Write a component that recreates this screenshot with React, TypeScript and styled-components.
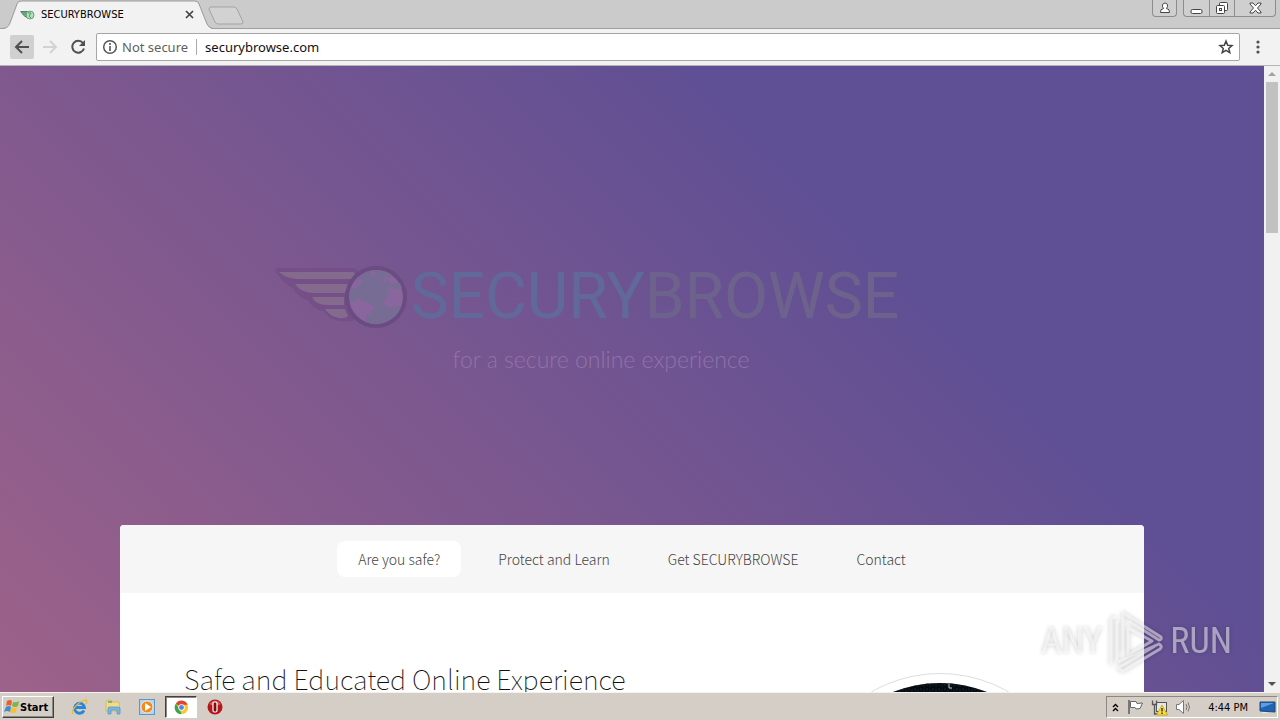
import React from "react";
import styled, { createGlobalStyle } from "styled-components";

const uiFont = '"DejaVu Sans Condensed", "DejaVu Sans", sans-serif';
const siteFont = '"Noto Sans CJK JP", "Noto Sans", sans-serif';

const GlobalStyle = createGlobalStyle`
  * { box-sizing: border-box; }
  body { margin: 0; background: #fff; }
  button, input { font: inherit; color: inherit; padding: 0; border: 0; background: none; }
  h1, h2, p { margin: 0; font-weight: inherit; }
  svg { display: block; flex: none; }
`;

const Screen = styled.div`
  height: 100vh;
  display: flex;
  flex-direction: column;
  overflow: hidden;
  font-family: ${uiFont};
`;

/* Browser window */

const TabStrip = styled.header`
  display: flex;
  height: 29px;
  flex: none;
  background: #cbcbcb;
  border-bottom: 1px solid #9f9f9f;
`;

const Tab = styled.div`
  display: grid;
  width: 208px;
  height: 29px;
  margin-left: 4px;
  > * { grid-area: 1 / 1; }
`;

const TabBody = styled.div`
  display: flex;
  align-items: center;
  gap: 6px;
  padding: 0 17px 0 16px;
  font-size: 11px;
  color: #000;
`;

const TabTitle = styled.span`
  flex: 1;
`;

const IconButton = styled.button<{ $size?: number; $active?: boolean }>`
  display: flex;
  align-items: center;
  justify-content: center;
  flex: none;
  width: ${(p) => p.$size ?? 24}px;
  height: ${(p) => p.$size ?? 24}px;
  border-radius: 2px;
  background: ${(p) => (p.$active ? "#d0d0d0" : "none")};
`;

const NewTab = styled.button`
  display: flex;
  align-self: flex-start;
  margin-top: 6px;
  margin-left: -4px;
`;

const WindowControls = styled.div`
  display: flex;
  align-items: flex-start;
  gap: 6px;
  margin-left: auto;
  padding-right: 4px;
`;

const ControlGroup = styled.div`
  display: flex;
  border: 1px solid #8d8d8d;
  border-top: 0;
  border-radius: 0 0 4px 4px;
  background: #cfcfcf;
`;

const ControlButton = styled.button<{ $width: number }>`
  display: flex;
  align-items: center;
  justify-content: center;
  width: ${(p) => p.$width}px;
  height: 16px;
  & + & { border-left: 1px solid #8d8d8d; }
`;

const Toolbar = styled.div`
  display: flex;
  align-items: center;
  gap: 4px;
  height: 37px;
  flex: none;
  padding: 0 10px;
  background: #f2f2f2;
  border-bottom: 1px solid #b5b2b8;
`;

const AddressBar = styled.div`
  display: flex;
  align-items: center;
  flex: 1;
  height: 28px;
  margin: 0 2px;
  padding: 0 5px;
  border: 1px solid #a6a6a6;
  border-radius: 2px;
  background: #fff;
  font-family: "Noto Sans", sans-serif;
  font-size: 13px;
`;

const Security = styled.button`
  display: flex;
  align-items: center;
  gap: 4px;
  height: 16px;
  padding-right: 8px;
  border-right: 1px solid #aaa;
  color: #5f5f5f;
`;

const Address = styled.input`
  flex: 1;
  min-width: 0;
  padding-left: 8px;
  color: #111;
  outline: none;
`;

/* Web page */

const Viewport = styled.div`
  position: relative;
  display: flex;
  flex: 1;
  min-height: 0;
`;

const Page = styled.main`
  flex: 1;
  min-width: 0;
  overflow: hidden;
  background: linear-gradient(45deg, #9d6289 0%, #5f4f94 70%);
  font-family: ${siteFont};
  font-weight: 300;
`;

const Hero = styled.header`
  display: flex;
  flex-direction: column;
  align-items: center;
  height: 459px;
  padding: 196px 90px 0 0;
`;

const Brand = styled.h1`
  display: flex;
  align-items: center;
  gap: 2px;
  height: 70px;
  font-family: Roboto, sans-serif;
  font-size: 64px;
  font-weight: 400;
  line-height: 70px;
`;

const BrandPart = styled.span<{ $color: string }>`
  color: ${(p) => p.$color};
`;

const Tagline = styled.p`
  padding: 14px 0 0 28px;
  font-family: Lato, sans-serif;
  font-size: 23px;
  line-height: 26px;
  color: #9272a8;
`;

const Card = styled.div`
  width: 81%;
  margin: 0 auto;
  border-radius: 4px;
  overflow: hidden;
  background: #fff;
  color: #555;
`;

const Nav = styled.nav`
  display: flex;
  align-items: center;
  justify-content: center;
  gap: 16px;
  height: 68px;
  background: #f6f6f6;
`;

const NavLink = styled.a<{ $active?: boolean }>`
  height: 36px;
  padding: 0 21px;
  border-radius: 8px;
  background: ${(p) => (p.$active ? "#fff" : "none")};
  color: #444;
  font-size: 14px;
  line-height: 36px;
  text-decoration: none;
  white-space: nowrap;
`;

const Section = styled.section`
  display: flex;
  justify-content: space-between;
  padding: 64px;
`;

const SectionTitle = styled.h2`
  font-size: 27px;
  line-height: 44px;
  font-weight: 100;
  color: #111;
`;

const RoundImage = styled.div`
  width: 276px;
  height: 276px;
  margin: 16px 2px 0 0;
  padding: 9px;
  border: 1px solid #ddd;
  border-radius: 50%;
`;

const ScrollBar = styled.div`
  display: flex;
  flex-direction: column;
  align-items: center;
  width: 16px;
  flex: none;
  background: #f1f1f1;
`;

const ScrollThumb = styled.div`
  width: 12px;
  height: 151px;
  background: #c1c1c1;
`;

const ScrollButton = styled.button`
  display: flex;
  align-items: center;
  justify-content: center;
  width: 16px;
  height: 16px;
  &:last-child { margin-top: auto; }
`;

const Watermark = styled.div`
  position: absolute;
  right: 48px;
  bottom: 18px;
  display: flex;
  align-items: center;
  gap: 5px;
  font-family: "Roboto Condensed", "Noto Sans CJK JP", sans-serif;
  font-size: 36px;
  line-height: 66px;
  color: rgba(255, 255, 255, 0.5);
  filter: drop-shadow(0 0 2px rgba(0, 0, 0, 0.4));
`;

/* Desktop taskbar */

const Taskbar = styled.footer`
  display: flex;
  align-items: center;
  height: 28px;
  flex: none;
  padding: 1px 2px 0;
  border-top: 1px solid #f4f2ee;
  background: #d5cec6;
`;

const StartButton = styled.button`
  display: flex;
  align-items: center;
  width: 52px;
  height: 22px;
  padding-left: 1px;
  border: 1px solid;
  border-color: #fff #404040 #404040 #fff;
  box-shadow: inset -1px -1px 0 #8c8780;
  font-size: 11px;
  font-weight: 700;
  color: #000;
`;

const QuickLaunch = styled.div`
  display: flex;
  align-items: center;
  gap: 2px;
  margin-left: 9px;
`;

const LaunchButton = styled.button<{ $active?: boolean }>`
  display: flex;
  align-items: center;
  justify-content: center;
  width: 32px;
  height: 22px;
  border: 1px solid;
  border-color: ${(p) => (p.$active ? "#404040 #fff #fff #404040" : "transparent")};
  box-shadow: ${(p) => (p.$active ? "inset 1px 1px 0 #8c8780" : "none")};
  background: ${(p) => (p.$active ? "#fff" : "none")};
`;

const Tray = styled.div`
  display: flex;
  align-items: center;
  gap: 7px;
  height: 22px;
  margin-left: auto;
  padding: 0 1px 0 3px;
  border: 1px solid;
  border-color: #8c8780 #fff #fff #8c8780;
  font-size: 11px;
  color: #000;
`;

const Clock = styled.time`
  padding: 0 4px 0 8px;
`;

const TabOutline = () => (
  <svg width="208" height="29" viewBox="0 0 208 29" aria-hidden="true">
    <path d="M0 29 L2 28 C4 27 5 25 6 23 L13 4 Q14 1 17 1 H191 Q194 1 195 4 L203 24 Q205 28 208 29Z" fill="#f2f2f2" />
    <path d="M0 28 C4 28 5 25 6 23 L13 4 Q14 1 17 1 H191 Q194 1 195 4 L203 24 Q205 28 208 28" fill="none" stroke="#999" />
  </svg>
);

const Favicon = () => (
  <svg width="15" height="12" viewBox="0 0 15 12" aria-hidden="true">
    <path d="M0 2 H9 L8 9 Q4 8 2 5Z" fill="#4c8563" />
    <path d="M2 4 H8 M4 6 H8" stroke="#8dbd9b" />
    <circle cx="10" cy="6" r="4" fill="#b8dcc0" stroke="#62a477" />
    <path d="M8 4 L11 4 L9 7 L11 9" fill="none" stroke="#45a25c" />
  </svg>
);

const WingGlobe = () => (
  <svg width="134" height="66" viewBox="0 0 134 66" aria-hidden="true">
    <path d="M0 6 Q0 4 3 4 H80 L84 8 L76 46 L80 56 C68 60 54 56 49 47 Q38 46 33 36 Q22 33 18 24 Q8 20 0 6Z" fill="#744f88" />
    <g fill="#846b8e">
      <path d="M4 8 H78 Q82 9 77 15 H22 Q10 14 4 8Z" />
      <path d="M20 20 H73 L70 29 H37 Q25 28 20 20Z" />
      <path d="M37 33 H69 V41 H52 Q41 41 37 33Z" />
      <path d="M50 45 H70 L73 52 Q70 55 64 54 Q54 52 50 45Z" />
    </g>
    <circle cx="101" cy="33" r="31" fill="#6c4b82" />
    <circle cx="101" cy="33" r="27" fill="#8a669f" />
    <g fill="#776d94">
      <path d="M83 14 Q91 6 101 6 Q112 6 118 12 L112 15 L116 20 L125 19 L127 24 L120 25 L114 23 L112 28 L116 32 L111 33 L108 38 L112 43 L121 43 L126 42 Q124 49 119 53 L113 57 Q102 63 91 58 L90 53 L97 48 L99 43 L92 39 L85 35 L80 36 L76 40 Q73 31 76 24 L80 25 L84 21 L82 18Z" />
    </g>
    <path d="M96 8 L101 8 L100 12 L96 13Z M107 16 L113 12 L114 15 L109 19Z" fill="#8a669f" />
    <path d="M80 20 L85 15 L88 17 L84 22Z" fill="#8a669f" />
  </svg>
);

const GlobePhoto = () => (
  <svg width="256" height="256" viewBox="0 0 256 256" role="img" aria-label="Binary code">
    <defs>
      <pattern id="code" width="6" height="5" patternUnits="userSpaceOnUse">
        <path d="M1 0 V3 M4 1 V4" stroke="#12222c" />
      </pattern>
    </defs>
    <circle cx="128" cy="128" r="128" fill="#050a10" />
    <circle cx="128" cy="128" r="128" fill="url(#code)" />
    <path d="M137 1 V5 H140" fill="none" stroke="#c5ced1" />
  </svg>
);

const PlayMark = () => (
  <svg width="58" height="64" viewBox="0 0 58 64" aria-hidden="true">
    <g fill="none" stroke="rgba(255,255,255,0.5)" strokeWidth="3" strokeLinejoin="round">
      <path d="M4 56 V11 Q4 9 9 8" />
      <path d="M10 52 V12" />
      <path d="M16 44 V4 L54 28 Q55 31 52 31 L22 12" />
      <path d="M21 19 V46 L45 32 L21 19" />
      <path d="M11 53 L52 35 Q56 37 53 40 L16 62 L11 59 L48 37" />
    </g>
  </svg>
);

const ChromeIcon = () => (
  <svg width="15" height="15" viewBox="0 0 16 16" aria-hidden="true">
    <circle cx="8" cy="8" r="7" fill="#f8c82c" />
    <path d="M8 8 L2 4 A7 7 0 0 1 14.5 5 H8Z" fill="#dc4535" />
    <path d="M2 4 L6 10 L8 15 A7 7 0 0 1 2 4Z" fill="#38a352" />
    <circle cx="8" cy="8" r="3.4" fill="#fff" />
    <circle cx="8" cy="8" r="2.6" fill="#4f86ec" />
  </svg>
);

export default function App() {
  return (
    <Screen>
      <GlobalStyle />
      <TabStrip>
        <Tab>
          <TabOutline />
          <TabBody>
            <Favicon />
            <TabTitle>SECURYBROWSE</TabTitle>
            <IconButton $size={12} aria-label="Close tab">
              <svg width="9" height="9" viewBox="0 0 9 9"><path d="M1 1 L8 8 M8 1 L1 8" stroke="#444" strokeWidth="1.7" /></svg>
            </IconButton>
          </TabBody>
        </Tab>
        <NewTab aria-label="New tab">
          <svg width="36" height="19" viewBox="0 0 36 19">
            <path d="M3 1 H26 Q28 1 29 3 L35 16 Q35 18 33 18 H10 Q8 18 7 16 L1 3 Q1 1 3 1Z" fill="#d2d2d2" stroke="#a3a3a3" />
          </svg>
        </NewTab>
        <WindowControls>
          <ControlGroup>
            <ControlButton $width={23} aria-label="Profile">
              <svg width="12" height="12" viewBox="0 0 12 12" fill="#fff" stroke="#444">
                <path d="M1.5 10.5 Q1 7 4.5 6.5 Q3 4.5 3.5 3 Q4 1 6 1 Q8 1 8.5 3 Q9 4.5 7.5 6.5 Q11 7 10.5 10.5Z" />
              </svg>
            </ControlButton>
          </ControlGroup>
          <ControlGroup>
            <ControlButton $width={25} aria-label="Minimize">
              <svg width="13" height="14" viewBox="0 0 13 14"><rect x="1" y="8.5" width="11" height="4" rx="1.5" fill="#fff" stroke="#444" /></svg>
            </ControlButton>
            <ControlButton $width={25} aria-label="Restore">
              <svg width="14" height="14" viewBox="0 0 14 14" fill="#fff" stroke="#444">
                <rect x="4.5" y="1.5" width="8" height="8" rx="1" />
                <rect x="1.5" y="4.5" width="8" height="8" rx="1" />
                <rect x="4.5" y="7.5" width="2" height="2" />
              </svg>
            </ControlButton>
            <ControlButton $width={41} aria-label="Close window">
              <svg width="13" height="12" viewBox="0 0 13 12">
                <path d="M1 1 H4 L6.5 3.8 L9 1 H12 V2 L8.5 6 L12 10 V11 H9 L6.5 8.2 L4 11 H1 V10 L4.5 6 L1 2Z" fill="#fff" stroke="#444" />
              </svg>
            </ControlButton>
          </ControlGroup>
        </WindowControls>
      </TabStrip>

      <Toolbar>
        <IconButton $active aria-label="Back">
          <svg width="16" height="16" viewBox="0 0 16 16"><path d="M15 8 H2 M8 2 L2 8 L8 14" fill="none" stroke="#505050" strokeWidth="2" /></svg>
        </IconButton>
        <IconButton aria-label="Forward">
          <svg width="16" height="16" viewBox="0 0 16 16"><path d="M1 8 H14 M8 2 L14 8 L8 14" fill="none" stroke="#d2d2d2" strokeWidth="2" /></svg>
        </IconButton>
        <IconButton aria-label="Reload">
          <svg width="16" height="16" viewBox="0 0 16 16">
            <path d="M13 4 A6 6 0 1 0 14 9.5" fill="none" stroke="#505050" strokeWidth="2" />
            <path d="M15 1 V7 H9Z" fill="#505050" />
          </svg>
        </IconButton>
        <AddressBar>
          <Security>
            <svg width="16" height="16" viewBox="0 0 16 16">
              <circle cx="8" cy="8" r="6.3" fill="none" stroke="#555" strokeWidth="1.5" />
              <path d="M8 7 V12 M8 4 V6" stroke="#555" strokeWidth="1.6" />
            </svg>
            Not secure
          </Security>
          <Address type="text" aria-label="Address" defaultValue="securybrowse.com" />
          <IconButton $size={16} aria-label="Bookmark this page">
            <svg width="16" height="16" viewBox="0 0 16 16">
              <path d="M8 2 L9.7 6.200 L14 6.500 L10.700 9.400 L11.800 13.600 L8 11.300 L4.200 13.600 L5.300 9.400 L2 6.500 L6.300 6.200Z" fill="none" stroke="#444" strokeWidth="1.5" />
            </svg>
          </IconButton>
        </AddressBar>
        <IconButton aria-label="Menu">
          <svg width="4" height="14" viewBox="0 0 4 14" fill="#505050">
            <circle cx="2" cy="2" r="1.6" /><circle cx="2" cy="7" r="1.6" /><circle cx="2" cy="12" r="1.6" />
          </svg>
        </IconButton>
      </Toolbar>

      <Viewport>
        <Page>
          <Hero>
            <Brand>
              <WingGlobe />
              <span>
                <BrandPart $color="#61699a">SECURY</BrandPart>
                <BrandPart $color="#6d628c">BROWSE</BrandPart>
              </span>
            </Brand>
            <Tagline>for a secure online experience</Tagline>
          </Hero>
          <Card>
            <Nav>
              <NavLink href="#safe" $active>Are you safe?</NavLink>
              <NavLink href="#learn">Protect and Learn</NavLink>
              <NavLink href="#get">Get SECURYBROWSE</NavLink>
              <NavLink href="#contact">Contact</NavLink>
            </Nav>
            <Section id="safe">
              <SectionTitle>Safe and Educated Online Experience</SectionTitle>
              <RoundImage><GlobePhoto /></RoundImage>
            </Section>
          </Card>
        </Page>
        <ScrollBar>
          <ScrollButton aria-label="Scroll up">
            <svg width="8" height="4" viewBox="0 0 8 4"><path d="M0 4 L4 0 L8 4Z" fill="#a3a3a3" /></svg>
          </ScrollButton>
          <ScrollThumb />
          <ScrollButton aria-label="Scroll down">
            <svg width="8" height="4" viewBox="0 0 8 4"><path d="M0 0 L4 4 L8 0Z" fill="#505050" /></svg>
          </ScrollButton>
        </ScrollBar>
        <Watermark>
          <span>ANY</span>
          <PlayMark />
          <span>RUN</span>
        </Watermark>
      </Viewport>

      <Taskbar>
        <StartButton>
          <svg width="16" height="16" viewBox="0 0 16 16" aria-hidden="true">
            <path d="M3 2 Q6 0 8 2 L7 7 Q4 5 2 7Z" fill="#e8602c" />
            <path d="M9 3 Q12 4 15 2 L14 7 Q11 9 8 7Z" fill="#7ab648" />
            <path d="M2 8 Q5 6 7 8 L6 13 Q3 11 0 13Z" fill="#3c8cd2" />
            <path d="M8 8 Q11 10 13 8 L12 13 Q9 15 6 13Z" fill="#f5c031" />
          </svg>
          Start
        </StartButton>
        <QuickLaunch>
          <LaunchButton aria-label="Internet Explorer">
            <svg width="17" height="17" viewBox="0 0 17 17">
              <path d="M13 11.5 A5 5 0 1 1 13.5 8.5 H5" fill="none" stroke="#2b86d3" strokeWidth="2.8" />
              <path d="M2 15 C-1 12 7 3 14 1 Q17 1 15 5" fill="none" stroke="#e9b93b" strokeWidth="1.3" />
            </svg>
          </LaunchButton>
          <LaunchButton aria-label="File Explorer">
            <svg width="17" height="16" viewBox="0 0 17 16">
              <path d="M1 2 L6 1 L7 3 H14 L15 12 H1Z" fill="#f1dc8a" stroke="#cfae55" strokeWidth="0.7" />
              <path d="M3 3 H7" stroke="#59aa63" strokeWidth="1.5" />
              <path d="M3 15 V9 Q3 8 5 8 H13 Q15 8 15 10 V15 H12 V11 H6 V15Z" fill="#78b9e3" stroke="#4d91bf" strokeWidth="0.7" />
            </svg>
          </LaunchButton>
          <LaunchButton aria-label="Media Player">
            <svg width="16" height="16" viewBox="0 0 16 16">
              <rect x="0.5" y="0.5" width="15" height="15" fill="#b4d4ee" stroke="#5b97c9" />
              <circle cx="8" cy="8" r="6" fill="#f28a1c" stroke="#fff" strokeWidth="0.7" />
              <path d="M6 4 L12 8 L6 12Z" fill="#fff" />
            </svg>
          </LaunchButton>
          <LaunchButton $active aria-label="Chrome"><ChromeIcon /></LaunchButton>
          <LaunchButton aria-label="Opera">
            <svg width="16" height="16" viewBox="0 0 16 16">
              <circle cx="8" cy="8" r="7.5" fill="#b5161b" />
              <path d="M2 5 Q8 -2 14 5 Q8 8 2 5Z" fill="#d9585a" />
              <rect x="6" y="3" width="4" height="10" rx="1.5" fill="#7c0b10" stroke="#fff" strokeWidth="1.2" />
            </svg>
          </LaunchButton>
        </QuickLaunch>
        <Tray>
          <IconButton $size={10} aria-label="Show hidden icons">
            <svg width="7" height="9" viewBox="0 0 7 9"><path d="M1 4 L3.5 1.5 L6 4 M1 8 L3.5 5.5 L6 8" fill="none" stroke="#000" strokeWidth="1.4" /></svg>
          </IconButton>
          <svg width="17" height="16" viewBox="0 0 17 16" role="img" aria-label="Action Center">
            <path d="M2 1 V15" stroke="#777" strokeWidth="2" />
            <path d="M3.5 2.5 H9 L10 4.5 L15.5 4 L13 9.5 L9 10 L8 8.5 H3.5Z" fill="#fff" stroke="#666" />
          </svg>
          <svg width="17" height="17" viewBox="0 0 17 17" role="img" aria-label="Network">
            <rect x="5.5" y="3.5" width="10" height="9" fill="#e8e6e2" stroke="#555" />
            <path d="M1.5 1.5 V5.5 H5.5 V1.5 M3.5 6 V15 H7" fill="none" stroke="#555" strokeWidth="1.3" />
            <path d="M11 6 L16.5 16 H5.5Z" fill="#f8df32" stroke="#b79b18" strokeWidth="0.7" />
            <path d="M11 9 V12.5 M11 13.5 V15" stroke="#222" strokeWidth="1.3" />
          </svg>
          <svg width="18" height="16" viewBox="0 0 18 16" role="img" aria-label="Volume">
            <path d="M1.5 5.5 H4 L8.5 1.5 V14.5 L4 10.5 H1.5Z" fill="#fff" stroke="#777" />
            <path d="M11 5 Q13 8 11 11 M13 3.5 Q16 8 13 12.5" fill="none" stroke="#777" />
          </svg>
          <Clock>4:44 PM</Clock>
          <svg width="17" height="14" viewBox="0 0 17 14" role="img" aria-label="Show desktop">
            <path d="M1 2 H16 V12 L1 11Z" fill="#1f63b5" stroke="#24476f" />
            <path d="M2 3 H15 L2 8Z" fill="#5b9fe0" />
            <path d="M3 12.5 H8" stroke="#dfe9f3" />
          </svg>
        </Tray>
      </Taskbar>
    </Screen>
  );
}
